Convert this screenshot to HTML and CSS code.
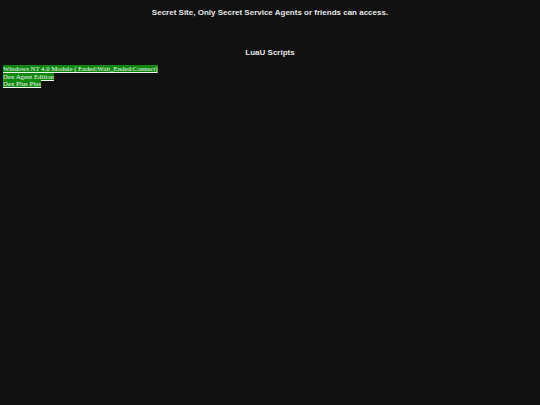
FILE: index.html
```html
<!DOCTYPE html>
<html>
<head>
<meta charset="utf-8">
<link rel="stylesheet" href="styles.css">
</head>
<body>
<h1 class="title">Secret Site, Only Secret Service Agents or friends can access.</h1>
<h2 class="section">LuaU Scripts</h2>
<ul class="links">
<li><a href="#">Windows NT 4.0 Module ( Ended:Wait_Ended:Connect)</a></li>
<li><a href="#">Dex Agent Edition</a></li>
<li><a href="#">Dex Plus Plus</a></li>
</ul>
</body>
</html>
```
FILE: styles.css
```css
html, body {
  margin: 0;
  padding: 0;
  background: #111111;
}
body {
  width: 540px;
  height: 405px;
}
.title {
  margin: 0;
  padding-top: 8px;
  font-family: "Liberation Sans", Arial, sans-serif;
  font-weight: bold;
  font-size: 8px;
  line-height: 10px;
  color: #e6e6e6;
  text-align: center;
}
.section {
  margin: 30px 0 0 0;
  font-family: "Liberation Sans", Arial, sans-serif;
  font-weight: bold;
  font-size: 8px;
  line-height: 10px;
  color: #e6e6e6;
  text-align: center;
}
.links {
  list-style: none;
  margin: 7px 0 0 0;
  padding: 0 0 0 3px;
  font-family: "Liberation Serif", "Times New Roman", serif;
  font-size: 6.8px;
  line-height: 7.5px;
}
.links a {
  background: #10880f;
  color: #eef6ee;
  text-decoration: underline;
}
```
